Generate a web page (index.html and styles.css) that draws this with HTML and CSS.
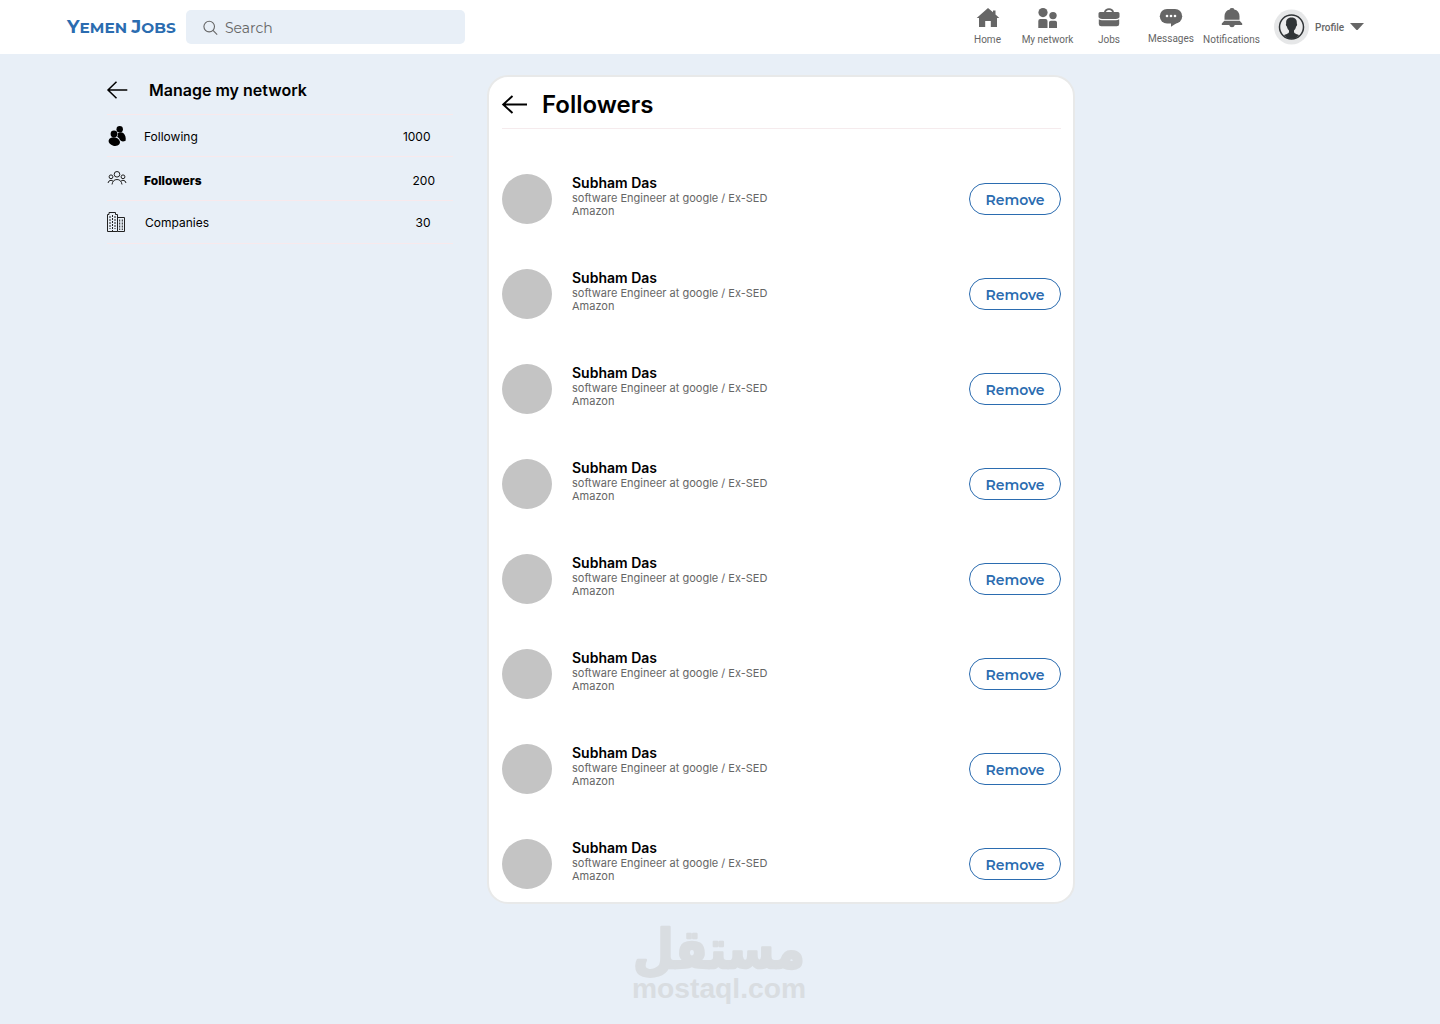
FILE: index.html
```html
<!DOCTYPE html>
<html lang="en">

	<head>
		<meta charset="utf-8">
		<title>Yemen Jobs</title>
		<link rel="stylesheet" href="styles.css">
	</head>

	<body>
		<header class="topbar">
			<a class="logo"><span class="cap">Y</span>EMEN <span class="cap">J</span>OBS</a>
			<div class="search">
				<svg width="16" height="16" viewBox="0 0 16 16" fill="none" stroke="#666" stroke-width="1.1"><circle cx="7.200" cy="6.600" r="5.300"/><path d="M11 10.400 L15.200 14.600"/></svg>
				<span class="search-text">Search</span>
			</div>
			<nav class="menu">
				<a class="menu-item">
					<svg width="24" height="20" viewBox="0 0 24 20" fill="#666"><path d="M12 0 L17 4.300 V2.500 H19.500 V6.500 L23.300 10 H21 V19 H14.800 V13 H9.200 V19 H3 V10 H0.700 Z"/></svg>
					<span>Home</span>
				</a>
				<a class="menu-item">
					<svg width="24" height="20" viewBox="0 0 24 20" fill="#666"><circle cx="7" cy="4.600" r="4.600"/><circle cx="17" cy="7.600" r="3.700"/><path d="M2.300 20 V13 Q2.300 11 4.300 11 H9.500 Q11.500 11 11.500 13 V20 Z M13 20 V14.500 Q13 12.700 14.800 12.700 H19.200 Q21 12.700 21 14.500 V20 Z"/></svg>
					<span>My network</span>
				</a>
				<a class="menu-item">
					<svg width="24" height="20" viewBox="0 0 24 20" fill="#666"><path d="M3 4 H7 Q8 0.300 12 0.300 Q16 0.300 17 4 H21 Q22.500 4 22.500 5.500 V9.200 Q21.500 11 19 11 H5 Q2.500 11 1.500 9.200 V5.500 Q1.500 4 3 4 Z M8.800 4 H15.200 Q14.200 1.900 12 1.900 Q9.800 1.900 8.800 4 Z" fill-rule="evenodd"/><path d="M1.800 11.300 Q3.300 12.300 5 12.300 H19 Q20.700 12.300 22.200 11.300 V16 Q22.200 18.300 19.700 18.300 H4.300 Q1.800 18.300 1.800 16 Z"/></svg>
					<span>Jobs</span>
				</a>
				<a class="menu-item">
					<svg width="24" height="19" viewBox="0 0 24 19" fill="#666"><rect x="0.800" y="1" width="22.400" height="14.500" rx="7.200"/><path d="M12 13 V18.800 L18.500 14.500 Z"/><g fill="#fff"><circle cx="8" cy="8" r="1.300"/><circle cx="12" cy="8" r="1.300"/><circle cx="16" cy="8" r="1.300"/></g></svg>
					<span>Messages</span>
				</a>
				<a class="menu-item">
					<svg width="24" height="20" viewBox="0 0 24 20" fill="#666"><path d="M4.500 11.800 V8.200 Q4.800 2.400 9.700 1.400 Q10 0.100 12 0.100 Q14 0.100 14.300 1.400 Q19.200 2.400 19.500 8.200 V11.800 Z M4.300 12.800 H19.700 L22.200 15.500 V17 H14.800 Q14.300 19.300 12 19.300 Q9.700 19.300 9.200 17 H1.800 V15.500 Z"/></svg>
					<span>Notifications</span>
				</a>
			</nav>
			<div class="profile">
				<svg width="35" height="36" viewBox="0 0 35 36"><circle cx="17.500" cy="18" r="17.500" fill="#e6e7e8"/><circle cx="17.500" cy="18" r="12" fill="#ececed" stroke="#303437" stroke-width="1.500"/><path d="M17.500 8.500 C21.500 8.500 23.200 11 22.800 14.500 C23.500 15 23 17 22.100 17.500 C21.800 19.500 20.800 20.500 20 21.500 V23 C20.500 25 23.500 25 25 26.300 Q22 29.800 17.500 29.800 Q13 29.800 10 26.300 C11.500 25 14.500 25 15 23 V21.500 C14.200 20.500 13.200 19.500 12.900 17.500 C12 17 11.500 15 12.200 14.500 C11.800 11 13.500 8.500 17.500 8.500 Z" fill="#303437"/></svg>
				<span>Profile</span>
				<svg width="14" height="8" viewBox="0 0 14 8" fill="#666"><path d="M0 0 H14 L8 6.600 Q7 7.600 6 6.600 Z"/></svg>
			</div>
		</header>

		<main class="content">
			<aside class="manage">
				<div class="manage-head">
					<svg width="21" height="18" viewBox="0 0 21 18" fill="none" stroke="#000" stroke-width="1.500"><path d="M20.300 9 H1 M9.500 0.700 L1 9 L9.500 17.300"/></svg>
					<h2>Manage my network</h2>
				</div>
				<!-- counters -->
				<div class="manage-row following">
					<svg width="20" height="20" viewBox="0 0 20 20"><circle cx="12.700" cy="3.200" r="3.200"/><circle cx="7" cy="8" r="3.400"/><path d="M10.600 7.500 Q13.500 5 16.500 7.300 Q19.300 10 18.600 14.700 Q15 16.500 13 14 Q12.500 12 10.200 10.800 Q11.300 9.500 10.600 7.500 Z"/><ellipse cx="7.300" cy="15.600" rx="5.800" ry="4.200" transform="rotate(14 7.300 15.600)"/></svg>
					<span class="label">Following</span>
					<span class="count">1000</span>
				</div>
				<div class="manage-row followers">
					<svg width="20" height="14" viewBox="0 0 20 14" fill="none" stroke="#222" stroke-width="1"><circle cx="10" cy="3.300" r="2.800"/><circle cx="4" cy="5.800" r="1.900"/><circle cx="16" cy="5.800" r="1.900"/><path d="M5 13.500 Q5.800 8.500 10 8.500 Q14.200 8.500 15 13.500 M1 12 Q1.500 9.300 4 9.300 Q5.300 9.300 6.200 10.300 M19 12 Q18.500 9.300 16 9.300 Q14.700 9.300 13.800 10.300"/></svg>
					<span class="label">Followers</span>
					<span class="count">200</span>
				</div>
				<div class="manage-row companies">
					<svg width="20" height="20" viewBox="0 0 20 20" fill="none" stroke="#222" stroke-width="1"><path d="M0.500 19.500 V2.500 H2 V0.500 H8.500 V2.500 H10.500 V19.500 Z M10.500 5.500 H17.500 V19.500 H10.500"/><path d="M3 4 V17 M5.500 3 V19 M8 4 V17 M12.700 7.500 V18 M15.300 7.500 V18" stroke-dasharray="2 1"/></svg>
					<span class="label">Companies</span>
					<span class="count">30</span>
				</div>
			</aside>

			<section class="card">
				<div class="card-head">
					<svg width="26" height="18" viewBox="0 0 26 18" fill="none" stroke="#000" stroke-width="1.900"><path d="M25 8.500 H1.200 M10.500 0 L1.200 8.500 L10.500 17"/></svg>
					<h1>Followers</h1>
				</div>
				<ul class="people">
					<li>
						<div class="avatar"></div>
						<div class="info">
							<h3>Subham Das</h3>
							<p>software Engineer at google / Ex-SED<br>Amazon</p>
						</div>
						<button class="remove">Remove</button>
					</li>
					<li>
						<div class="avatar"></div>
						<div class="info">
							<h3>Subham Das</h3>
							<p>software Engineer at google / Ex-SED<br>Amazon</p>
						</div>
						<button class="remove">Remove</button>
					</li>
					<li>
						<div class="avatar"></div>
						<div class="info">
							<h3>Subham Das</h3>
							<p>software Engineer at google / Ex-SED<br>Amazon</p>
						</div>
						<button class="remove">Remove</button>
					</li>
					<li>
						<div class="avatar"></div>
						<div class="info">
							<h3>Subham Das</h3>
							<p>software Engineer at google / Ex-SED<br>Amazon</p>
						</div>
						<button class="remove">Remove</button>
					</li>
					<li>
						<div class="avatar"></div>
						<div class="info">
							<h3>Subham Das</h3>
							<p>software Engineer at google / Ex-SED<br>Amazon</p>
						</div>
						<button class="remove">Remove</button>
					</li>
					<li>
						<div class="avatar"></div>
						<div class="info">
							<h3>Subham Das</h3>
							<p>software Engineer at google / Ex-SED<br>Amazon</p>
						</div>
						<button class="remove">Remove</button>
					</li>
					<li>
						<div class="avatar"></div>
						<div class="info">
							<h3>Subham Das</h3>
							<p>software Engineer at google / Ex-SED<br>Amazon</p>
						</div>
						<button class="remove">Remove</button>
					</li>
					<li>
						<div class="avatar"></div>
						<div class="info">
							<h3>Subham Das</h3>
							<p>software Engineer at google / Ex-SED<br>Amazon</p>
						</div>
						<button class="remove">Remove</button>
					</li>
				</ul>
			</section>
		</main>

		<footer class="mark">
			<svg width="180" height="104" viewBox="0 -14 180 104">
				<text class="mark-ar" x="90" y="48" text-anchor="middle" textLength="172" lengthAdjust="spacingAndGlyphs">مستقل</text>
				<text class="mark-en" x="90" y="78" text-anchor="middle" textLength="174" lengthAdjust="spacingAndGlyphs">mostaql.com</text>
			</svg>
		</footer>
	</body>

</html>
```
FILE: styles.css
```css
* {
	box-sizing: border-box;
}
body {
	margin: 0;
	height: 1024px;
	overflow: hidden;
	background: #e8eff7;
	font-family: Inter, "Liberation Sans", sans-serif;
	color: #000;
}
h1, h2, h3, p, ul {
	margin: 0;
	padding: 0;
}
svg {
	display: block;
	flex: none;
	overflow: visible;
}

/* top bar */
.topbar {
	display: flex;
	height: 54px;
	padding-left: 67px;
	background: #fff;
}
.logo {
	width: 119px;
	padding-top: 17px;
	font-family: Montserrat, Inter, sans-serif;
	font-size: 15.3px;
	line-height: 20px;
	font-weight: 700;
	white-space: nowrap;
	color: #2b6cb0;
}
.logo .cap {
	font-size: 18.5px;
}
.search {
	display: flex;
	align-items: center;
	gap: 7px;
	width: 279px;
	height: 34px;
	margin-top: 10px;
	padding: 2px 0 0 16px;
	border-radius: 5px;
	background: #e8eff7;
}
.search-text {
	font-family: Montserrat, Inter, sans-serif;
	font-size: 14px;
	color: #666;
}
.menu {
	display: grid;
	grid-template-columns: 60px 60px 63px 61px 60px;
	margin-left: 492.5px;
	padding-top: 8px;
	font-family: Roboto, sans-serif;
	font-size: 10px;
	line-height: 12px;
	color: #666;
}
.menu-item {
	display: flex;
	flex-direction: column;
	align-items: center;
	gap: 6px;
	white-space: nowrap;
}
.profile {
	display: flex;
	align-items: center;
	gap: 6px;
	margin-left: 12.5px;
	font-family: Roboto, sans-serif;
	font-size: 10px;
	font-weight: 500;
	color: #666;
}

/* page */
.content {
	display: flex;
	align-items: flex-start;
	gap: 35px;
	padding: 22px 0 0 107px;
}
.manage {
	width: 346px;
	font-size: 12px;
}
.manage-head {
	display: flex;
	gap: 21px;
	height: 39px;
	padding-top: 5px;
	border-bottom: 1px solid #f8e9ec;
}
.manage-head h2 {
	font-size: 16px;
	line-height: 18px;
	font-weight: 600;
}
.manage-row {
	display: flex;
	align-items: center;
	gap: 17px;
	border-bottom: 1px solid #f8e9ec;
}
.manage-row .label {
	flex: 1;
}
.following {
	height: 42px;
	padding: 1px 22.5px 0 0;
}
.followers {
	height: 44px;
	padding: 4px 18px 0 0;
}
.followers svg {
	margin-bottom: 5px;
}
.followers .label {
	font-weight: 800;
}
.companies {
	height: 43px;
	gap: 18px;
	padding: 0 22.5px 0 0;
}

/* followers card */
.card {
	width: 588px;
	height: 829px;
	margin: -1px 0 0 -1px;
	padding: 13px 12px 12px 13px;
	border: 2px solid #e8e9e9;
	border-radius: 21px;
	background: #fff;
}
.card-head {
	display: flex;
	align-items: center;
	gap: 14px;
	height: 39px;
	padding-bottom: 9px;
	border-bottom: 1px solid #f5ebed;
}
.card-head h1 {
	font-size: 24px;
	line-height: 28px;
	font-weight: 600;
}
.people {
	display: grid;
	gap: 45px;
	padding-top: 45px;
	list-style: none;
}
.people li {
	display: flex;
	align-items: center;
	height: 50px;
}
.avatar {
	width: 50px;
	height: 50px;
	border-radius: 50%;
	background: #c4c4c4;
}
.info {
	flex: 1;
	height: 50px;
	padding-left: 20px;
}
.info h3 {
	font-size: 14px;
	line-height: 18px;
	font-weight: 600;
}
.info p {
	font-size: 11px;
	line-height: 13px;
	color: #666;
}
.remove {
	width: 92px;
	height: 32px;
	padding: 1px 0 0;
	border: 1px solid #2b6cb0;
	border-radius: 16px;
	background: #fff;
	font-family: Montserrat, Inter, sans-serif;
	font-size: 14px;
	font-weight: 600;
	color: #2b6cb0;
}

/* bottom mark */
.mark {
	display: flex;
	padding: 2px 0 0 629px;
}
.mark text {
	fill: #d9dde1;
	font-weight: 700;
}
.mark-ar {
	font-family: "DejaVu Sans", sans-serif;
	font-size: 54px;
	stroke: #d9dde1;
	stroke-width: 2.5;
	stroke-linejoin: round;
}
.mark-en {
	font-family: "Liberation Sans", sans-serif;
	font-size: 28px;
}
```
